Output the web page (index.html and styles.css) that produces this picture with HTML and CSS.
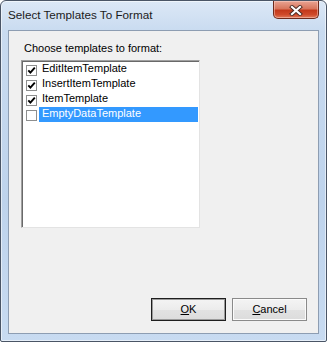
FILE: index.html
```html
<!DOCTYPE html>
<html>
<head>
<meta charset="utf-8">
<link rel="stylesheet" href="styles.css">
</head>
<body>
<div class="window">
  <div class="titlebar">
    <span class="title">Select Templates To Format</span>
    <div class="close">
      <svg width="14" height="11" viewBox="0 0 14 11">
        <path d="M3 2 L11 9 M11 2 L3 9" stroke="#4a2a22" stroke-width="4" stroke-linecap="square"/>
        <path d="M3 2 L11 9 M11 2 L3 9" stroke="#ffffff" stroke-width="2.2" stroke-linecap="square"/>
      </svg>
    </div>
  </div>
  <div class="client">
    <div class="label">Choose templates to format:</div>
    <div class="listbox">
      <div class="item"><span class="check"><svg width="9" height="9" viewBox="0 0 9 9"><path d="M1.3 4.3 L3.4 6.6 L7.8 1.6" fill="none" stroke="#000" stroke-width="1.9"/></svg></span><span class="text">EditItemTemplate</span></div>
      <div class="item"><span class="check"><svg width="9" height="9" viewBox="0 0 9 9"><path d="M1.3 4.3 L3.4 6.6 L7.8 1.6" fill="none" stroke="#000" stroke-width="1.9"/></svg></span><span class="text">InsertItemTemplate</span></div>
      <div class="item"><span class="check"><svg width="9" height="9" viewBox="0 0 9 9"><path d="M1.3 4.3 L3.4 6.6 L7.8 1.6" fill="none" stroke="#000" stroke-width="1.9"/></svg></span><span class="text">ItemTemplate</span></div>
      <div class="item"><span class="check"></span><span class="text selected">EmptyDataTemplate</span></div>
    </div>
    <div class="buttons">
      <div class="btn default"><u>O</u>K</div>
      <div class="btn"><u>C</u>ancel</div>
    </div>
  </div>
</div>
</body>
</html>
```
FILE: styles.css
```css
html, body {
  margin: 0;
  padding: 0;
  background: #ffffff;
}
.window {
  width: 327px;
  height: 342px;
  box-sizing: border-box;
  border: 1px solid #4a5566;
  border-radius: 6px 6px 2px 2px;
  background: linear-gradient(to bottom, #dce8f6 0px, #c9dbf0 30px, #bed3ec 200px, #c8dbf1 342px);
  box-shadow: inset 0 0 0 1px rgba(255,255,255,0.55);
  padding: 0 7px 7px 7px;
  display: flex;
  flex-direction: column;
  font-family: "Liberation Sans", Arial, sans-serif;
}
.titlebar {
  height: 29px;
  display: flex;
  align-items: flex-start;
  flex-shrink: 0;
}
.title {
  font-size: 11.7px;
  color: #1b1b1b;
  line-height: 14px;
  margin-top: 7px;
}
.close {
  margin-left: auto;
  width: 46px;
  height: 18px;
  box-sizing: border-box;
  border: 1px solid #6d2a1c;
  border-top: none;
  border-radius: 0 0 5px 5px;
  background: linear-gradient(to bottom, #e9a493 0%, #d8765d 45%, #c3391b 55%, #cf4a2a 80%, #e07a5a 100%);
  box-shadow: inset 0 0 0 1px rgba(255,220,210,0.45);
  display: flex;
  align-items: center;
  justify-content: center;
  padding-top: 1px;
}
.close svg {
  display: block;
}
.client {
  flex: 1;
  border: 1px solid #8d9db2;
  background: #f0f0f0;
  display: flex;
  flex-direction: column;
  padding: 11px 11px 12px 12px;
}
.label {
  font-size: 11px;
  line-height: 13px;
  color: #000;
  padding-left: 3px;
}
.listbox {
  margin-top: 5px;
  width: 179px;
  height: 168px;
  box-sizing: border-box;
  border: 1px solid;
  border-color: #a0a0a0 #e3e3e3 #e3e3e3 #a0a0a0;
  box-shadow: inset 1px 1px 0 #696969;
  padding: 1px 1px 1px 2px;
  background: #ffffff;
}
.item {
  display: flex;
  height: 15px;
  align-items: flex-start;
}
.check {
  width: 11px;
  height: 11px;
  box-sizing: border-box;
  border: 1px solid #8e8f8f;
  background: #fff;
  margin: 3px 2px 0 2px;
  display: flex;
  align-items: center;
  justify-content: center;
  flex-shrink: 0;
}
.check svg {
  display: block;
}
.text {
  flex: 1;
  height: 15px;
  box-sizing: border-box;
  padding-left: 3px;
  font-size: 11px;
  line-height: 13px;
  color: #000;
}
.text.selected {
  background: #3399ff;
  color: #ffffff;
}
.buttons {
  margin-top: auto;
  display: flex;
  justify-content: flex-end;
  gap: 6px;
}
.btn {
  width: 75px;
  height: 23px;
  box-sizing: border-box;
  border: 1px solid #8a8a8a;
  background: linear-gradient(to bottom, #f4f4f4 0%, #ececec 50%, #e2e2e2 51%, #dcdcdc 100%);
  box-shadow: inset 0 0 0 1px #fbfbfb;
  font-size: 11px;
  line-height: 21px;
  text-align: center;
  color: #000;
}
.btn.default {
  border: 1px solid #1e1e1e;
  box-shadow: inset 0 0 0 1px #9a9a9a;
}
.btn u {
  text-decoration: underline;
  text-underline-offset: 1px;
}
```
